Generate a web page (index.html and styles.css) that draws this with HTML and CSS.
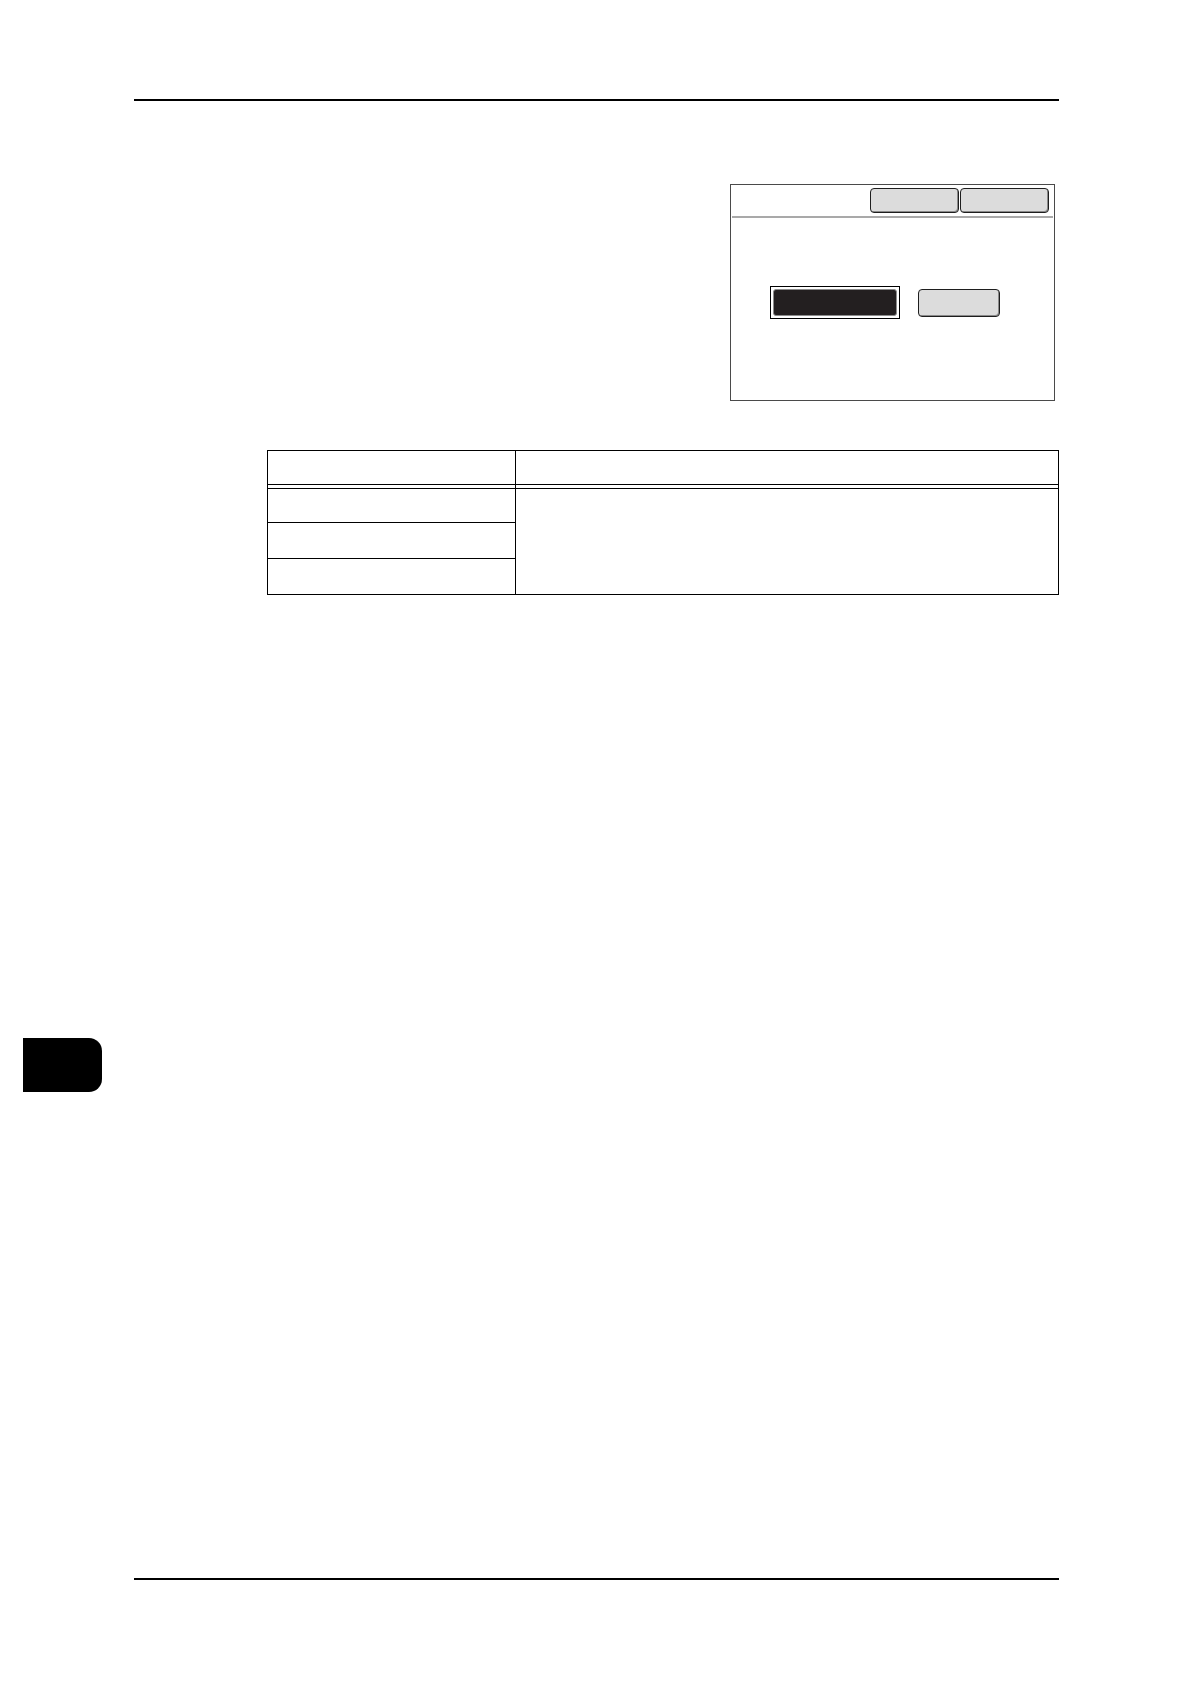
FILE: index.html
```html
<!DOCTYPE html>
<html lang="en">
<head>
<meta charset="utf-8">
<title>Page</title>
<link rel="stylesheet" href="styles.css">
</head>
<body>
<div class="page">
  <div class="rule-top"></div>

  <div class="dlg">
    <div class="dlg-head">
      <div class="btn-top"></div>
      <div class="btn-top"></div>
    </div>
    <div class="dlg-sep"></div>
    <div class="dlg-body">
      <div class="sel-frame"><div class="btn-dark"></div></div>
      <div class="btn-gray"></div>
    </div>
  </div>

  <div class="tbl">
    <div class="col-l">
      <div class="c-head"></div>
      <div class="c-gap"></div>
      <div class="c-row r1"></div>
      <div class="c-row r2"></div>
      <div class="c-row r3"></div>
    </div>
    <div class="col-r">
      <div class="c-head"></div>
      <div class="c-gap"></div>
      <div class="c-body"></div>
    </div>
  </div>

  <div class="rule-bottom"></div>
  <div class="tab"></div>
</div>
</body>
</html>
```

FILE: styles.css
```css
html, body {
  margin: 0;
  padding: 0;
  background: #ffffff;
  font-family: "Liberation Sans", Arial, sans-serif;
}

.page {
  position: relative;
  width: 1190px;
  height: 1684px;
  display: flex;
  flex-direction: column;
  overflow: hidden;
}

.rule-top {
  margin: 99px 0 0 134px;
  width: 925px;
  height: 2px;
  background: #000;
  flex: none;
}

.rule-bottom {
  margin: auto 0 104px 134px;
  width: 925px;
  height: 2px;
  background: #000;
  flex: none;
}

/* Dialog screenshot */
.dlg {
  flex: none;
  box-sizing: border-box;
  margin: 83px 0 0 730px;
  width: 325px;
  height: 217px;
  border: 1px solid #4a4a4a;
  padding: 1px;
  display: flex;
  flex-direction: column;
  background: #fff;
}

.dlg-head {
  display: flex;
  justify-content: flex-end;
  gap: 1px;
  padding: 2px 4px 0 0;
}

.btn-top {
  box-sizing: border-box;
  width: 89px;
  height: 25px;
  background: #dcdcdc;
  border: 1px solid #1e1e1e;
  border-radius: 4px;
  box-shadow: inset -1px -1px 0 #8a8a8a;
}

.dlg-sep {
  margin-top: 3px;
  height: 2px;
  background: #a9a9a9;
}

.dlg-body {
  display: flex;
  align-items: center;
  padding: 68px 0 0 38px;
}

.sel-frame {
  box-sizing: border-box;
  width: 130px;
  height: 33px;
  border: 1px solid #000;
  padding: 2px;
  background: #fff;
}

.btn-dark {
  box-sizing: border-box;
  width: 100%;
  height: 100%;
  background: #231f20;
  border: 1px solid #8c8c8c;
  border-radius: 3px;
}

.btn-gray {
  box-sizing: border-box;
  margin-left: 18px;
  width: 82px;
  height: 28px;
  background: #dcdcdc;
  border: 1px solid #1e1e1e;
  border-radius: 4px;
  box-shadow: inset -1px -1px 0 #8a8a8a;
}

/* Table */
.tbl {
  flex: none;
  box-sizing: border-box;
  margin: 49px 0 0 267px;
  width: 792px;
  border: 1px solid #000;
  display: flex;
}

.col-l {
  box-sizing: border-box;
  width: 248px;
  border-right: 1px solid #000;
  display: flex;
  flex-direction: column;
}

.col-r {
  flex: 1;
  display: flex;
  flex-direction: column;
}

.c-head {
  height: 33px;
  border-bottom: 1px solid #000;
}

.c-gap {
  height: 3px;
}

.c-row {
  border-top: 1px solid #000;
}

.r1 { height: 33px; }
.r2 { height: 35px; }
.r3 { height: 35px; }

.c-body {
  flex: 1;
  border-top: 1px solid #000;
}

/* Chapter thumb tab */
.tab {
  position: absolute;
  left: 23px;
  top: 1038px;
  width: 79px;
  height: 54px;
  background: #000;
  border-radius: 0 13px 13px 0;
}
```
